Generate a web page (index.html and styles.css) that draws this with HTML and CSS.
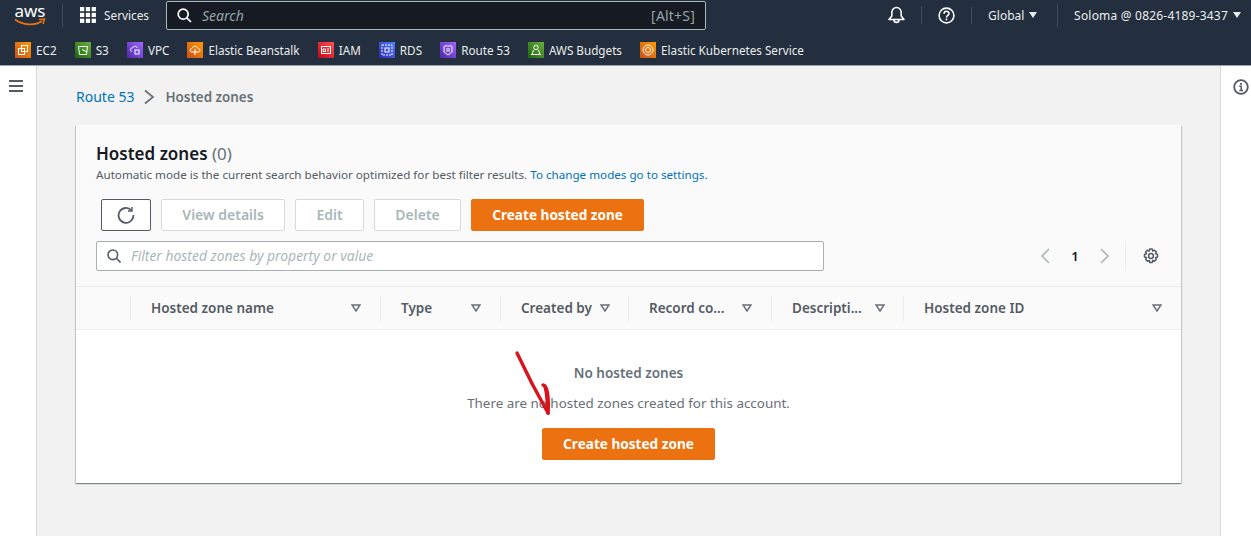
FILE: index.html
```html
<!DOCTYPE html>
<html>
    <head>
        <title>Route 53 - Hosted zones</title>
        <link rel="stylesheet" href="styles.css">
    </head>
    <body>
        <header class="nav">
            <div class="nav-top">
                <div class="logo">
                    <span class="logo-text">aws</span>
                    <svg class="logo-smile" width="32" height="9" viewBox="0 0 32 9"><path d="M1 1.5C9 7.500 21 8 28 3" fill="none" stroke="#ec7211" stroke-width="1.800"/><path d="M25 1.500 30.500 1 29 6" fill="none" stroke="#ec7211" stroke-width="1.500"/></svg>
                </div>
                <div class="nav-sep"></div>
                <div class="services">
                    <svg width="16" height="16" viewBox="0 0 17 17" fill="#fff"><rect width="4.500" height="4.500"/><rect x="6.200" width="4.500" height="4.500"/><rect x="12.400" width="4.500" height="4.500"/><rect y="6.200" width="4.500" height="4.500"/><rect x="6.200" y="6.200" width="4.500" height="4.500"/><rect x="12.400" y="6.200" width="4.500" height="4.500"/><rect y="12.400" width="4.500" height="4.500"/><rect x="6.200" y="12.400" width="4.500" height="4.500"/><rect x="12.400" y="12.400" width="4.500" height="4.500"/></svg>
                    <span>Services</span>
                </div>
                <div class="search">
                    <svg width="15" height="15" viewBox="0 0 15 15" fill="none" stroke="#fff" stroke-width="1.700"><circle cx="6.200" cy="6.200" r="5"/><path d="M9.800 9.800 14 14"/></svg>
                    <span class="search-text">Search</span>
                    <span class="search-key">[Alt+S]</span>
                </div>
                <div class="nav-right">
                    <div class="nav-icon">
                        <svg width="17" height="18" viewBox="0 0 17 18" fill="none" stroke="#fff" stroke-width="1.600"><path d="M1 13.500h15L13.200 10V6.800C13.200 3.800 11.200 1.500 8.500 1.500S3.800 3.800 3.800 6.800V10Z" stroke-linejoin="round"/><path d="M6 14c0 3.200 5 3.200 5 0"/></svg>
                    </div>
                    <div class="nav-icon help">
                        <svg width="17" height="17" viewBox="0 0 17 17" fill="none" stroke="#fff" stroke-width="1.600"><circle cx="8.500" cy="8.500" r="7.400"/><path d="M6 6.700c0-3.300 5-3.300 5-.2 0 1.900-2.500 1.900-2.500 3.900"/><path d="M8.500 11.500v1.800"/></svg>
                    </div>
                    <div class="nav-menu region">Global <span class="caret"></span></div>
                    <div class="nav-menu account">Soloma @ 0826-4189-3437 <span class="caret"></span></div>
                </div>
            </div>
            <div class="shortcuts">
                <div class="shortcut"><span class="tile orange"><svg width="12" height="12" viewBox="0 0 12 12" fill="none" stroke="#fff"><rect x="4.500" y="1.500" width="6" height="6"/><rect x="1.500" y="4.500" width="6" height="6"/></svg></span>EC2</div>
                <div class="shortcut"><span class="tile green"><svg width="12" height="12" viewBox="0 0 12 12" fill="none" stroke="#fff"><path d="M1.500 2.500h9l-1 8h-7Z"/><path d="M5 5.500 10 8"/></svg></span>S3</div>
                <div class="shortcut"><span class="tile purple"><svg width="12" height="12" viewBox="0 0 12 12" fill="none" stroke="#fff"><path d="M3 7.500C.5 7 1 4 3.500 4 4.500 1.500 8 2 8.500 4"/><rect x="6" y="6" width="4" height="4"/></svg></span>VPC</div>
                <div class="shortcut"><span class="tile orange"><svg width="12" height="12" viewBox="0 0 12 12" fill="none" stroke="#fff"><path d="M3 8C.5 8 .5 4.500 3 4.500 4 1.500 8 1.500 9 4.500 11.500 4.500 11.500 8 9 8H3Z"/><path d="M6 5v6"/></svg></span>Elastic Beanstalk</div>
                <div class="shortcut"><span class="tile red"><svg width="12" height="12" viewBox="0 0 12 12" fill="none" stroke="#fff"><rect x="1.500" y="2.500" width="9" height="7"/><path d="M3 5h2.500v2.500H3ZM7 5h2M7 7h2"/></svg></span>IAM</div>
                <div class="shortcut"><span class="tile blue"><svg width="12" height="12" viewBox="0 0 12 12" fill="none" stroke="#fff" stroke-dasharray="2 1"><rect x="1" y="1" width="10" height="10"/><rect x="4" y="4" width="4" height="4" stroke-dasharray="none"/></svg></span>RDS</div>
                <div class="shortcut"><span class="tile purple"><svg width="12" height="12" viewBox="0 0 12 12" fill="none" stroke="#fff"><path d="M2 2.500 4 1.500 6 2.500 8 1.500 10 2.500V8L6 11 2 8Z"/><path d="M4 5h4M4 7h4"/></svg></span>Route 53</div>
                <div class="shortcut"><span class="tile green"><svg width="12" height="12" viewBox="0 0 12 12" fill="none" stroke="#fff"><circle cx="6" cy="3.500" r="2.200"/><path d="M3.500 6 2 10.500h8L8.500 6M1 10.500h10"/></svg></span>AWS Budgets</div>
                <div class="shortcut"><span class="tile orange"><svg width="12" height="12" viewBox="0 0 12 12" fill="none" stroke="#fff"><circle cx="6" cy="6" r="5"/><circle cx="6" cy="6" r="2.500"/></svg></span>Elastic Kubernetes Service</div>
            </div>
        </header>

        <div class="layout">
            <aside class="side-left">
                <div class="burger"><span></span><span></span><span></span></div>
            </aside>
            <main class="content">
                <div class="crumbs">
                    <a class="link">Route 53</a>
                    <svg width="12" height="16" viewBox="0 0 12 16" fill="none" stroke="#687078" stroke-width="1.700"><path d="M2 1.500 10 8 2 14.500"/></svg>
                    <b>Hosted zones</b>
                </div>
                <section class="card">
                    <div class="card-head">
                        <h1>Hosted zones <span class="count">(0)</span></h1>
                        <p class="hint">Automatic mode is the current search behavior optimized for best filter results. <a class="link">To change modes go to settings.</a></p>
                        <div class="actions">
                            <button class="btn refresh">
                                <svg width="18" height="18" viewBox="0 0 16 16" fill="none" stroke="#545b64" stroke-width="1.600"><path d="M12.800 3.800A6.600 6.600 0 1 0 14.600 8"/><path d="M13.300 .8v3.700H9.800" stroke-width="1.300"/></svg>
                            </button>
                            <button class="btn" disabled>View details</button>
                            <button class="btn" disabled>Edit</button>
                            <button class="btn" disabled>Delete</button>
                            <button class="btn primary">Create hosted zone</button>
                        </div>
                        <div class="filter-row">
                            <div class="filter">
                                <svg width="14" height="14" viewBox="0 0 14 14" fill="none" stroke="#545b64" stroke-width="1.600"><circle cx="5.800" cy="5.800" r="4.800"/><path d="M9.300 9.300 13.500 13.500"/></svg>
                                <span>Filter hosted zones by property or value</span>
                            </div>
                            <div class="pager">
                                <svg width="10" height="16" viewBox="0 0 10 16" fill="none" stroke="#aab7b8" stroke-width="1.600"><path d="M9 1 2 8l7 7"/></svg>
                                <span>1</span>
                                <svg width="10" height="16" viewBox="0 0 10 16" fill="none" stroke="#aab7b8" stroke-width="1.600"><path d="M1 1l7 7-7 7"/></svg>
                            </div>
                            <div class="gear">
                                <svg width="16" height="16" viewBox="0 0 16 16" fill="none" stroke="#545b64" stroke-width="1.500"><circle cx="8" cy="8" r="2.400"/><path d="M6.700 1h2.600l.4 2 1.800-.8 1.900 1.900-.9 1.700 2 .6v2.600l-2 .6.900 1.700-1.900 1.900-1.800-.8-.4 2H6.700l-.4-2-1.800.8-1.900-1.900.9-1.700-2-.6V6.400l2-.6-.9-1.700 1.900-1.900 1.800.8Z" stroke-linejoin="round"/></svg>
                            </div>
                        </div>
                    </div>
                    <div class="thead">
                        <div class="th check"></div>
                        <div class="th name">Hosted zone name<svg class="sort" width="10" height="8" viewBox="0 0 10 8"><path d="M1 1h8L5 7Z"/></svg></div>
                        <div class="th type">Type<svg class="sort" width="10" height="8" viewBox="0 0 10 8"><path d="M1 1h8L5 7Z"/></svg></div>
                        <div class="th created">Created by<svg class="sort" width="10" height="8" viewBox="0 0 10 8"><path d="M1 1h8L5 7Z"/></svg></div>
                        <div class="th records">Record co...<svg class="sort" width="10" height="8" viewBox="0 0 10 8"><path d="M1 1h8L5 7Z"/></svg></div>
                        <div class="th desc">Descripti...<svg class="sort" width="10" height="8" viewBox="0 0 10 8"><path d="M1 1h8L5 7Z"/></svg></div>
                        <div class="th zoneid">Hosted zone ID<svg class="sort" width="10" height="8" viewBox="0 0 10 8"><path d="M1 1h8L5 7Z"/></svg></div>
                    </div>
                    <div class="empty">
                        <b>No hosted zones</b>
                        <p>There are no hosted zones created for this account.</p>
                        <button class="btn primary">Create hosted zone</button>
                        <svg class="arrow" width="40" height="72" viewBox="0 0 40 72" fill="none" stroke="#d7141e" stroke-width="3.400" stroke-linecap="round" stroke-linejoin="round"><path d="M3 3C10 18 22 42 34 63"/><path d="M29 35C32 34 33 46 34 63"/><path d="M31 36C34 40 35 52 34 63"/></svg>
                    </div>
                </section>
            </main>
            <aside class="side-right">
                <svg width="16" height="16" viewBox="0 0 16 16" fill="none" stroke="#545b64" stroke-width="1.800"><circle cx="8" cy="8" r="6.800"/><path d="M6.300 7.300H8.200V11.500M6.300 11.500h3.800" stroke-width="1.500"/><path d="M8 4v1.800" stroke-width="1.900"/></svg>
            </aside>
        </div>
    </body>
</html>
```

FILE: styles.css
```css
* {
    box-sizing: border-box;
}
html, body {
    height: 100%;
}
body {
    margin: 0;
    overflow: hidden;
    background-color: #f2f2f2;
    color: #16191f;
    font-family: "Noto Sans", "Liberation Sans", sans-serif;
    font-size: 14px;
}
.link {
    color: #0073bb;
}

/* top bar */
.nav {
    height: 66px;
    background-color: #232f3e;
    border-bottom: 1px solid #9ba3ab;
    color: #eaeded;
}
.nav-top {
    display: flex;
    align-items: center;
    height: 30px;
    padding-left: 14px;
    font-size: 12px;
}
.logo {
    display: flex;
    flex-direction: column;
    width: 32px;
    height: 26px;
    color: #fff;
}
.logo-text {
    font-size: 17px;
    line-height: 17px;
    text-align: center;
}
.logo-smile {
    margin-top: -1px;
}
.nav-sep {
    width: 1px;
    height: 24px;
    margin-left: 16px;
    background-color: #414d5c;
}
.services {
    display: flex;
    align-items: center;
    gap: 8px;
    width: 86px;
    margin-left: 17px;
    font-size: 11.800px;
}
.search {
    display: flex;
    align-items: center;
    width: 540px;
    height: 29px;
    padding: 0 10px;
    background-color: #161a22;
    border: 1px solid #aab7b8;
    border-radius: 2px;
}
.search-text {
    margin-left: 10px;
    font-size: 14px;
    font-style: italic;
    color: #95a5a6;
}
.search-key {
    margin-left: auto;
    font-size: 14px;
    letter-spacing: .2px;
    color: #95a5a6;
}
.nav-right {
    display: flex;
    align-items: center;
    margin-left: auto;
    height: 24px;
}
.nav-icon {
    display: flex;
    justify-content: center;
    width: 50px;
    border-right: 1px solid #414d5c;
}
.nav-menu {
    display: flex;
    align-items: center;
    gap: 5px;
    height: 24px;
    white-space: nowrap;
}
.region {
    width: 86px;
    padding-left: 16px;
    border-right: 1px solid #414d5c;
}
.account {
    padding: 0 10px 0 16px;
    letter-spacing: .2px;
}
.caret {
    width: 0;
    height: 0;
    border-left: 4px solid transparent;
    border-right: 4px solid transparent;
    border-top: 6px solid #eaeded;
}
.shortcuts {
    display: flex;
    align-items: center;
    height: 35px;
    padding: 5px 0 0 15px;
    font-size: 11.700px;
}
.shortcut {
    display: flex;
    align-items: center;
    gap: 5px;
    height: 20px;
    margin-right: 18.100px;
    white-space: nowrap;
}
.tile {
    display: flex;
    align-items: center;
    justify-content: center;
    width: 16px;
    height: 16px;
}
.orange { background: linear-gradient(45deg, #c8511b, #ff9900); }
.green { background: linear-gradient(45deg, #1b660f, #6cae3e); }
.purple { background: linear-gradient(45deg, #4d27aa, #a166ff); }
.red { background: linear-gradient(45deg, #bd0816, #ff5252); }
.blue { background: linear-gradient(45deg, #2e27ad, #527fff); }

/* page */
.layout {
    display: flex;
    height: 470px;
}
.side-left {
    width: 37px;
    padding: 14px 13px 0 9px;
    background-color: #fff;
    border-right: 1px solid #d5dbdb;
}
.burger {
    display: flex;
    flex-direction: column;
    gap: 3px;
}
.burger span {
    height: 2px;
    background-color: #545b64;
}
.side-right {
    width: 31px;
    padding: 13px 0 0 12px;
    background-color: #fff;
    border-left: 1px solid #d5dbdb;
}
.content {
    flex: 1;
    padding: 0 39px 0 39px;
}
.crumbs {
    display: flex;
    align-items: center;
    gap: 9px;
    height: 59px;
    padding-top: 2px;
}
.crumbs b {
    margin-left: 1px;
    font-size: 13.400px;
    color: #687078;
    font-weight: 600;
}

/* card */
.card {
    height: 358px;
    background-color: #fff;
    box-shadow: 0 1px 1px 0 rgba(0, 28, 36, 0.3), 1px 1px 1px 0 rgba(0, 28, 36, 0.15), -1px 1px 1px 0 rgba(0, 28, 36, 0.15);
}
.card-head {
    height: 162px;
    padding: 17px 20px 0 20px;
    background-color: #fafafa;
    border-bottom: 1px solid #eaeded;
}
h1 {
    margin: 0;
    font-size: 17px;
    line-height: 24px;
    font-weight: 600;
}
.count {
    font-weight: 400;
    color: #687078;
}
.hint {
    margin: 0;
    font-size: 11.650px;
    line-height: 17px;
    color: #545b64;
}
.actions {
    display: flex;
    gap: 10px;
    margin: 16px 0 0 5px;
}
.btn {
    height: 32px;
    padding: 0 20.300px 2px 20.300px;
    background-color: #fff;
    border: 1px solid #d5dbdb;
    border-radius: 2px;
    color: #aab7b8;
    font-family: inherit;
    font-size: 14px;
    font-weight: 600;
    white-space: nowrap;
}
.btn.refresh {
    display: flex;
    align-items: center;
    justify-content: center;
    width: 50px;
    padding: 0;
    border-color: #545b64;
}
.btn.primary {
    padding: 0 0 2px 0;
    width: 173px;
    background-color: #ec7211;
    border-color: #ec7211;
    color: #fff;
    font-size: 13.600px;
    font-weight: 700;
}
.filter-row {
    display: flex;
    align-items: center;
    margin-top: 10px;
}
.filter {
    display: flex;
    align-items: center;
    gap: 10px;
    width: 728px;
    height: 30px;
    padding: 0 0 2px 10px;
    background-color: #fff;
    border: 1px solid #a9b0b4;
    border-radius: 2px;
    font-size: 13.900px;
    font-style: italic;
    color: #aab7b8;
}
.filter svg {
    margin-top: 2px;
}
.pager {
    display: flex;
    align-items: center;
    justify-content: space-between;
    width: 70px;
    margin-left: auto;
    margin-right: 15px;
    font-size: 13px;
    font-weight: 600;
}
.gear {
    display: flex;
    justify-content: flex-end;
    width: 36px;
    height: 30px;
    align-items: center;
    padding-right: 2px;
    border-left: 1px solid #eaeded;
}

/* table */
.thead {
    display: grid;
    grid-template-columns: 54px 250px 120px 128px 143px 132px 1fr;
    align-items: center;
    height: 43px;
    background-color: #fafafa;
    border-bottom: 1px solid #eaeded;
}
.th {
    display: flex;
    align-items: center;
    justify-content: space-between;
    height: 25px;
    padding: 0 19px 0 20px;
    border-left: 1px solid #eaeded;
    font-size: 13.500px;
    font-weight: 600;
    color: #545b64;
    white-space: nowrap;
}
.th.check {
    border-left: none;
}
.th.created, .th.desc {
    padding-right: 18px;
}
.sort {
    fill: none;
    stroke: #687078;
    stroke-width: 1.500;
}
.empty {
    position: relative;
    display: flex;
    flex-direction: column;
    align-items: center;
    padding-top: 33px;
    color: #687078;
}
.empty b {
    font-size: 13.500px;
    line-height: 20px;
    font-weight: 600;
}
.empty p {
    margin: 10px 0 15px 0;
    line-height: 20px;
    font-size: 13.400px;
}
.arrow {
    position: absolute;
    left: 438px;
    top: 20px;
}
```
